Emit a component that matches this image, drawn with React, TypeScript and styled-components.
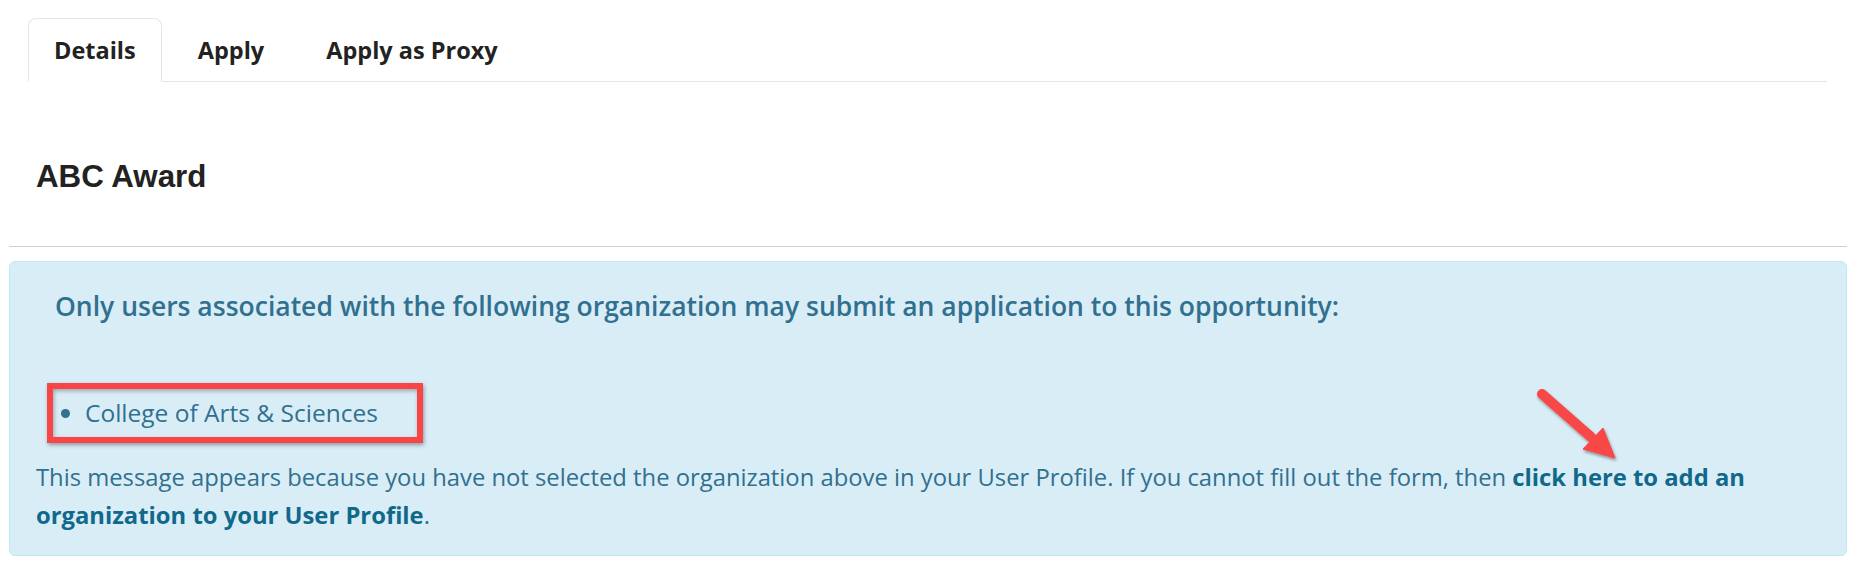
import React from "react";
import styled, { createGlobalStyle } from "styled-components";

const GlobalStyle = createGlobalStyle`
  html, body {
    margin: 0;
    padding: 0;
    background: #ffffff;
  }
  body {
    font-family: "Open Sans", "Noto Sans", sans-serif;
  }
`;

const Page = styled.div`
  padding: 0 13px 0 9px;
  width: 1860px;
  box-sizing: border-box;
`;

const TabBar = styled.ul`
  display: flex;
  list-style: none;
  margin: 18px 20px 0 19px;
  padding: 0;
  border-bottom: 1px solid #e3e5e8;
`;

const Tab = styled.li<{ $active?: boolean }>`
  height: 62px;
  display: flex;
  align-items: center;
  padding: 0 25px;
  margin-right: 10px;
  margin-bottom: -1px;
  border: 1px solid ${(p) => (p.$active ? "#e3e5e8" : "transparent")};
  border-bottom-color: ${(p) => (p.$active ? "#ffffff" : "transparent")};
  border-radius: 8px 8px 0 0;
  background: ${(p) => (p.$active ? "#ffffff" : "transparent")};
  font-size: 23.5px;
  font-weight: 700;
  color: #222222;
  cursor: pointer;
`;

const Title = styled.h3`
  margin: 80px 0 54px 27px;
  font-family: "Liberation Sans", Arial, sans-serif;
  font-size: 31.3px;
  line-height: 30px;
  font-weight: 700;
  color: #222222;
`;

const Rule = styled.hr`
  margin: 0;
  border: 0;
  border-top: 1px solid #cfcfcf;
`;

const Alert = styled.div`
  position: relative;
  margin-top: 14px;
  padding: 29px 20px 21px 26px;
  background: #d9edf7;
  border: 1px solid #bce8f1;
  border-radius: 6px;
  color: #31708f;
`;

const AlertHeading = styled.h4`
  margin: 0 0 0 19px;
  font-size: 26.5px;
  line-height: 30px;
  font-weight: 600;
  color: #31708f;
`;

const Highlight = styled.div`
  width: 376px;
  height: 60px;
  box-sizing: border-box;
  margin: 62px 0 0 11px;
  border: 6px solid #f84646;
  box-shadow: 1px 2px 4px rgba(0, 0, 0, 0.35), inset 1px 2px 4px rgba(0, 0, 0, 0.3);
  display: flex;
  align-items: center;
`;

const OrgList = styled.ul`
  margin: 0;
  padding: 0 0 0 32px;
  font-size: 24.5px;
  line-height: 30px;
`;

const Message = styled.p`
  margin: 15px 0 0;
  font-size: 23.8px;
  line-height: 38px;
`;

const Link = styled.a`
  color: #10698a;
  font-weight: 700;
  text-decoration: none;
`;

const Arrow = styled.svg`
  position: absolute;
  left: 1523px;
  top: 124px;
  overflow: visible;
`;

export default function App() {
  return (
    <>
      <GlobalStyle />
      <Page>
        <TabBar>
          <Tab $active>Details</Tab>
          <Tab>Apply</Tab>
          <Tab>Apply as Proxy</Tab>
        </TabBar>
        <Title>ABC Award</Title>
        <Rule />
        <Alert>
          <AlertHeading>
            Only users associated with the following organization may submit
            an application to this opportunity:
          </AlertHeading>
          <Highlight>
            <OrgList>
              <li>College of Arts &amp; Sciences</li>
            </OrgList>
          </Highlight>
          <Message>
            This message appears because you have not selected the organization
            above in your User Profile. If you cannot fill out the form, then{" "}
            <Link href="#">
              click here to add an organization to your User Profile
            </Link>
            .
          </Message>
          <Arrow width="90" height="80" viewBox="0 0 90 80">
            <defs>
              <filter id="shadow" x="-30%" y="-30%" width="160%" height="160%">
                <feDropShadow dx="1" dy="2" stdDeviation="1.5" floodOpacity="0.4" />
              </filter>
            </defs>
            <g filter="url(#shadow)" fill="#f84646" stroke="#f84646">
              <line x1="9" y1="8" x2="58" y2="51" strokeWidth="10" strokeLinecap="round" />
              <polygon points="82,72 50,63 70,42" strokeWidth="1" strokeLinejoin="round" />
            </g>
          </Arrow>
        </Alert>
      </Page>
    </>
  );
}
